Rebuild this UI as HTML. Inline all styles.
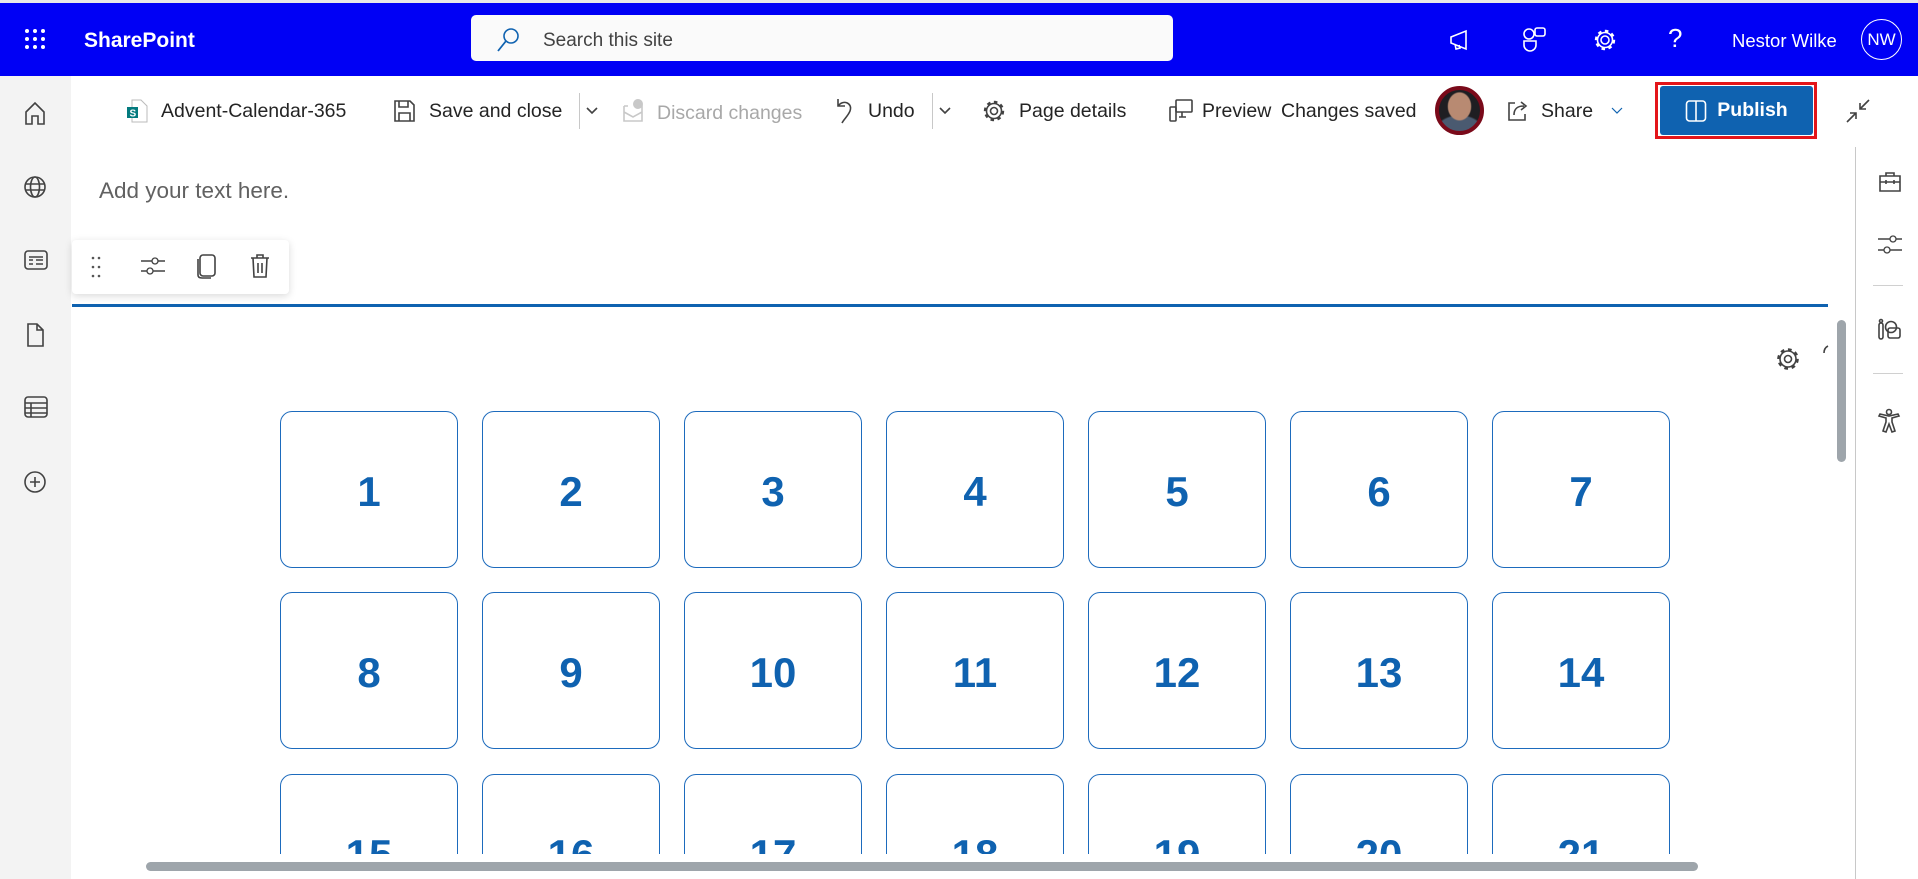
<!DOCTYPE html>
<html style="overflow:hidden"><head><meta charset="utf-8"><style>
*{box-sizing:border-box;margin:0;padding:0}
body{width:1918px;height:879px;overflow:hidden;background:#fff;font-family:"Liberation Sans",sans-serif;position:relative;color:#242424}
.a{position:absolute}
.hdr{left:0;top:0;width:1918px;height:76px;background:#0000f5;border-top:3px solid #e8e8e8}
.wt{color:#fff}
.cmd{font-size:19.5px;color:#242424;top:100px;white-space:nowrap}
.ico{stroke:#424242;fill:none;stroke-width:1.6}
.tile{width:178px;height:157px;border:1.5px solid #1d6bbd;border-radius:12px;display:flex;align-items:center;justify-content:center;font-weight:bold;font-size:42px;color:#0f62b0;padding-top:4px}
.rail svg{position:absolute;left:23px}
</style></head><body>
<div class="a hdr"></div>
<svg class="a" style="left:24px;top:28px" width="22" height="22"><g fill="#fff"><circle cx="3" cy="3" r="2"/><circle cx="11" cy="3" r="2"/><circle cx="19" cy="3" r="2"/><circle cx="3" cy="11" r="2"/><circle cx="11" cy="11" r="2"/><circle cx="19" cy="11" r="2"/><circle cx="3" cy="19" r="2"/><circle cx="11" cy="19" r="2"/><circle cx="19" cy="19" r="2"/></g></svg>
<div class="a wt" style="left:84px;top:29px;font-size:21px;font-weight:bold">SharePoint</div>
<div class="a" style="left:471px;top:15px;width:702px;height:46px;background:#fafafa;border-radius:5px"></div>
<svg class="a" style="left:496px;top:27px" width="24" height="26"><circle cx="15" cy="9" r="7" stroke="#0f62b0" stroke-width="1.6" fill="none"/><path d="M10 14 L2 24" stroke="#0f62b0" stroke-width="1.8"/></svg>
<div class="a" style="left:543px;top:30px;font-size:19px;color:#424242">Search this site</div>
<svg class="a" style="left:1448px;top:28px" width="24" height="24"><path d="M3 9 L18 3 V21 L3 15 Z M7 16 L8 21 L12 20 L11 17" stroke="#fff" stroke-width="1.6" fill="none"/></svg>
<svg class="a" style="left:1522px;top:26px" width="26" height="28"><circle cx="7" cy="8" r="5" stroke="#fff" stroke-width="1.6" fill="none"/><rect x="13" y="2" width="10" height="8" rx="2" stroke="#fff" stroke-width="1.6" fill="none"/><path d="M2 15 H14 V19 A6 6 0 0 1 2 19 Z" stroke="#fff" stroke-width="1.6" fill="none"/></svg>
<svg class="a" style="left:1593px;top:28px" width="24" height="24"><circle cx="12" cy="12" r="4" stroke="#fff" stroke-width="1.6" fill="none"/><circle cx="12" cy="12" r="9" stroke="#fff" stroke-width="2.4" stroke-dasharray="3.5 3.5" fill="none"/><circle cx="12" cy="12" r="7.5" stroke="#fff" stroke-width="1.6" fill="none"/></svg>
<div class="a wt" style="left:1668px;top:23px;font-size:26px">?</div>
<div class="a wt" style="left:1732px;top:30px;font-size:18.5px">Nestor Wilke</div>
<div class="a wt" style="left:1861px;top:19px;width:41px;height:41px;border:1.5px solid #fff;border-radius:50%;font-size:17px;display:flex;align-items:center;justify-content:center">NW</div>
<div class="a rail" style="left:0;top:76px;width:71px;height:803px;background:#f3f3f3">
<svg style="top:24px" width="24" height="26"><path d="M3 12 L12 3 L21 12 V24 H15 V16 H9 V24 H3 Z" class="ico"/></svg>
<svg style="top:99px" width="24" height="24"><circle cx="12" cy="12" r="10" class="ico"/><ellipse cx="12" cy="12" rx="4.5" ry="10" class="ico"/><path d="M2 9 H22 M2 15 H22" class="ico"/></svg>
<svg style="top:172px" width="26" height="24"><rect x="2" y="3" width="22" height="18" rx="3" class="ico"/><path d="M6 9 H20 M6 12 H10 M13 12 H20 M6 16 H10 M13 16 H20" class="ico"/></svg>
<svg style="top:246px" width="24" height="26"><path d="M5 2 H14 L20 8 V24 H5 Z M14 2 V8 H20" class="ico"/></svg>
<svg style="top:319px" width="26" height="24"><rect x="2" y="2" width="22" height="20" rx="3" class="ico"/><path d="M2 8 H24 M2 13 H24 M2 18 H24 M8 8 V22" class="ico"/></svg>
<svg style="top:394px" width="24" height="24"><circle cx="12" cy="12" r="10" class="ico"/><path d="M12 7 V17 M7 12 H17" class="ico"/></svg>
</div>
<svg class="a" style="left:126px;top:99px" width="22" height="24"><path d="M6 1 H15 L21 7 V23 H6 Z" fill="#fff" stroke="#bbb"/><rect x="1" y="8" width="11" height="11" fill="#037a7e"/><text x="3.5" y="17.5" font-size="10" fill="#fff" font-family="Liberation Sans" font-weight="bold">S</text></svg>
<div class="a cmd" style="left:161px">Advent-Calendar-365</div>
<svg class="a" style="left:393px;top:99px" width="22" height="24"><path d="M2 2 H17 L21 6 V22 H2 Z M6 2 V8 H15 V2 M6 22 V14 H17 V22" class="ico"/></svg>
<div class="a cmd" style="left:429px">Save and close</div>
<div class="a" style="left:579px;top:93px;width:1px;height:36px;background:#c8c8c8"></div>
<svg class="a" style="left:586px;top:107px" width="12" height="8"><path d="M1 1 L6 6 L11 1" class="ico" stroke-width="1.2"/></svg>
<svg class="a" style="left:621px;top:98px" width="24" height="26"><path d="M3 8 H7 M17 8 H21 V23 H3 V8 M3 14 L12 19 L21 14" stroke="#c8c8c8" stroke-width="1.6" fill="none"/><circle cx="17" cy="6" r="5" fill="#c8c8c8"/></svg>
<div class="a cmd" style="left:657px;color:#a8a8a8;top:102px">Discard changes</div>
<svg class="a" style="left:834px;top:97px" width="20" height="28"><path d="M4 2 V9 H11 M4 9 C9 2 19 6 16 14 C14 19 10 22 8 26" class="ico"/></svg>
<div class="a cmd" style="left:868px">Undo</div>
<div class="a" style="left:932px;top:93px;width:1px;height:36px;background:#c8c8c8"></div>
<svg class="a" style="left:939px;top:107px" width="12" height="8"><path d="M1 1 L6 6 L11 1" class="ico" stroke-width="1.2"/></svg>
<svg class="a" style="left:982px;top:99px" width="24" height="24"><circle cx="12" cy="12" r="3.5" class="ico"/><circle cx="12" cy="12" r="9" stroke="#424242" stroke-width="2.4" stroke-dasharray="3.5 3.5" fill="none"/><circle cx="12" cy="12" r="7.5" class="ico"/></svg>
<div class="a cmd" style="left:1019px">Page details</div>
<svg class="a" style="left:1168px;top:98px" width="26" height="26"><rect x="8" y="2" width="16" height="12" rx="1" class="ico"/><path d="M14 14 V19 M11 19 H18" class="ico"/><rect x="2" y="9" width="6" height="14" rx="1" class="ico" fill="#fff"/></svg>
<div class="a cmd" style="left:1202px">Preview</div>
<div class="a cmd" style="left:1281px">Changes saved</div>
<div class="a" style="left:1435px;top:86px;width:49px;height:49px;border-radius:50%;border:4px solid #7a0a1a;background:radial-gradient(ellipse 30% 36% at 50% 40%,#b88a72 0 90%,transparent 100%),radial-gradient(ellipse 60% 40% at 50% 100%,#4a5a70 0 90%,transparent 100%),#1e1e22"></div>
<svg class="a" style="left:1505px;top:99px" width="26" height="24"><path d="M10 4 H4 V21 H20 V15 M9 16 C9 9 13 7 19 7 M16 3 L21 7 L16 11" class="ico"/></svg>
<div class="a cmd" style="left:1541px">Share</div>
<svg class="a" style="left:1611px;top:107px" width="12" height="8"><path d="M1 1 L6 6 L11 1" stroke="#0f62b0" stroke-width="1.2" fill="none"/></svg>
<div class="a" style="left:1655px;top:82px;width:162px;height:57px;border:3px solid #e3151a"></div>
<div class="a" style="left:1660px;top:86px;width:153px;height:49px;background:#0f62b0;border-radius:3px;color:#fff;font-weight:bold;font-size:19.5px;display:flex;align-items:center;justify-content:center;gap:10px"><svg width="22" height="24"><rect x="1.5" y="2" width="19" height="20" rx="3" stroke="#fff" stroke-width="1.6" fill="none"/><path d="M11 2 V22" stroke="#fff" stroke-width="1.6"/></svg>Publish</div>
<svg class="a" style="left:1845px;top:98px" width="26" height="26"><path d="M24 2 L15 11 M15 5 V11 H21 M2 24 L11 15 M5 15 H11 V21" class="ico" stroke-width="1.3"/></svg>
<div class="a" style="left:99px;top:178px;font-size:22.5px;color:#616161">Add your text here.</div>
<div class="a" style="left:72px;top:240px;width:217px;height:54px;background:#fff;border-radius:4px;box-shadow:0 2px 8px rgba(0,0,0,.15)"></div>
<svg class="a" style="left:90px;top:254px" width="12" height="26"><g fill="#555"><circle cx="3" cy="4" r="1.3"/><circle cx="9" cy="4" r="1.3"/><circle cx="3" cy="13" r="1.3"/><circle cx="9" cy="13" r="1.3"/><circle cx="3" cy="22" r="1.3"/><circle cx="9" cy="22" r="1.3"/></g></svg>
<svg class="a" style="left:140px;top:254px" width="26" height="24"><path d="M1 7 H25 M1 17 H25" class="ico" stroke-width="1.3"/><circle cx="15" cy="7" r="3" fill="#fff" stroke="#424242" stroke-width="1.3"/><circle cx="10" cy="17" r="3" fill="#fff" stroke="#424242" stroke-width="1.3"/></svg>
<svg class="a" style="left:196px;top:253px" width="22" height="26"><rect x="4" y="2" width="15" height="21" rx="3" class="ico" stroke-width="1.4"/><path d="M2 6 V22 Q2 25 6 25 H15" class="ico" stroke-width="1.4"/></svg>
<svg class="a" style="left:249px;top:253px" width="22" height="26"><path d="M2 5 H20 M8 5 V2 H14 V5 M4 5 L5 24 H17 L18 5 M9 10 V20 M13 10 V20" class="ico" stroke-width="1.4"/></svg>
<div class="a" style="left:72px;top:304px;width:1756px;height:3px;background:#0f62b0"></div>
<svg class="a" style="left:1775px;top:346px" width="26" height="26"><circle cx="13" cy="13" r="3.5" class="ico"/><circle cx="13" cy="13" r="9.5" stroke="#424242" stroke-width="2.6" stroke-dasharray="3.7 3.7" fill="none"/><circle cx="13" cy="13" r="8" class="ico"/></svg>
<svg class="a" style="left:1822px;top:345px" width="8" height="12"><path d="M6 1 Q2 3 2 8" class="ico"/></svg>
<div class="a" style="left:1837px;top:320px;width:9px;height:142px;background:#9ea5ab;border-radius:5px"></div>
<div class="a" style="left:146px;top:862px;width:1552px;height:9px;background:#9ea5ab;border-radius:5px"></div>
<div class="a" style="left:1855px;top:147px;width:1px;height:732px;background:#c8c8c8"></div>
<div class="a" style="left:1873px;top:285px;width:30px;height:1px;background:#d0d0d0"></div>
<div class="a" style="left:1873px;top:373px;width:30px;height:1px;background:#d0d0d0"></div>
<svg class="a" style="left:1878px;top:170px" width="24" height="24"><path d="M8 6 V3 H16 V6 M2 6 H22 V21 H2 Z M2 12 H22 M8 10 V14 M16 10 V14" class="ico" stroke-width="1.4"/></svg>
<svg class="a" style="left:1877px;top:234px" width="26" height="22"><path d="M1 5 H25 M1 16 H25" class="ico" stroke-width="1.3"/><circle cx="16" cy="5" r="3" fill="#fff" stroke="#424242" stroke-width="1.3"/><circle cx="10" cy="16" r="3" fill="#fff" stroke="#424242" stroke-width="1.3"/></svg>
<svg class="a" style="left:1877px;top:318px" width="26" height="24"><rect x="2" y="5" width="4" height="16" rx="2" class="ico" stroke-width="1.4"/><circle cx="4" cy="3" r="1.5" class="ico"/><circle cx="14" cy="9" r="5.5" class="ico" stroke-width="1.4"/><rect x="11" y="10" width="12" height="10" rx="2" class="ico" stroke-width="1.4"/></svg>
<svg class="a" style="left:1877px;top:408px" width="24" height="26"><circle cx="12" cy="4" r="2.5" class="ico" stroke-width="1.4"/><path d="M2 8 L9 10 V14 L6 23 L9 24 L12 16 L15 24 L18 23 L15 14 V10 L22 8 L21 6 L12 8 L3 6 Z" class="ico" stroke-width="1.3"/></svg>
<div class="a" style="left:0;top:0;width:1918px;height:854px;overflow:hidden;pointer-events:none">
<div class="a tile" style="left:280px;top:411px">1</div>
<div class="a tile" style="left:482px;top:411px">2</div>
<div class="a tile" style="left:684px;top:411px">3</div>
<div class="a tile" style="left:886px;top:411px">4</div>
<div class="a tile" style="left:1088px;top:411px">5</div>
<div class="a tile" style="left:1290px;top:411px">6</div>
<div class="a tile" style="left:1492px;top:411px">7</div>
<div class="a tile" style="left:280px;top:592px">8</div>
<div class="a tile" style="left:482px;top:592px">9</div>
<div class="a tile" style="left:684px;top:592px">10</div>
<div class="a tile" style="left:886px;top:592px">11</div>
<div class="a tile" style="left:1088px;top:592px">12</div>
<div class="a tile" style="left:1290px;top:592px">13</div>
<div class="a tile" style="left:1492px;top:592px">14</div>
<div class="a tile" style="left:280px;top:774px">15</div>
<div class="a tile" style="left:482px;top:774px">16</div>
<div class="a tile" style="left:684px;top:774px">17</div>
<div class="a tile" style="left:886px;top:774px">18</div>
<div class="a tile" style="left:1088px;top:774px">19</div>
<div class="a tile" style="left:1290px;top:774px">20</div>
<div class="a tile" style="left:1492px;top:774px">21</div>
</div>
</body></html>
